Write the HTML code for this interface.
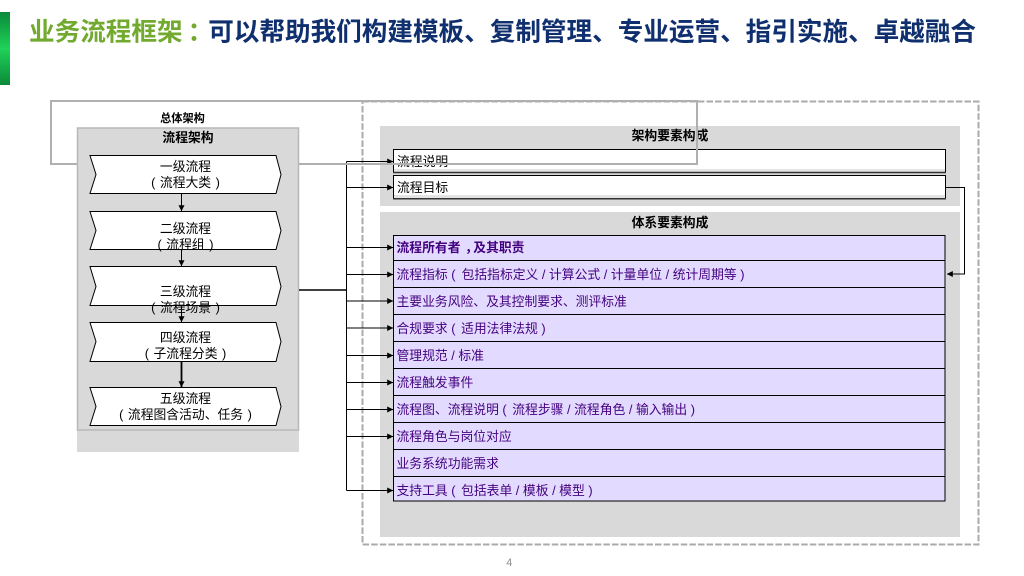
<!DOCTYPE html>
<html lang="zh-CN">
<head>
<meta charset="utf-8">
<title>业务流程框架</title>
<style>
html,body{margin:0;padding:0;background:#fff;width:1024px;height:576px;overflow:hidden}
svg{display:block;position:absolute;left:0;top:0}
text{font-family:"Liberation Sans","Noto Sans CJK SC",sans-serif;font-size:12.8px;fill:#000}
.b{font-weight:700}
.m{text-anchor:middle}
.p{fill:#43007f}
.w{word-spacing:1px}
.l{stroke:#000;stroke-width:1;fill:none}
.c{fill:#fff;stroke:#000;stroke-width:1}
</style>
</head>
<body>
<svg width="1024" height="576" viewBox="0 0 1024 576" xmlns="http://www.w3.org/2000/svg">
<defs>
<linearGradient id="g" x1="0" y1="0" x2="0" y2="1">
<stop offset="0" stop-color="#0a8a3a"/>
<stop offset=".5" stop-color="#1fd258"/>
<stop offset="1" stop-color="#0a8a3a"/>
</linearGradient>
<marker id="a" markerWidth="6" markerHeight="6" refX="5.8" refY="3" orient="auto" markerUnits="userSpaceOnUse">
<path d="M0 0L6 3L0 6Z" fill="#000"/>
</marker>
</defs>

<rect x="0" y="12" width="10" height="73" fill="url(#g)"/>
<text x="29" y="40.500" style="font-size:25.6px;font-weight:700;fill:#0f2f6e"><tspan style="fill:#72a92f">业务流程框架</tspan><tspan dx="5" style="fill:#72a92f;font-family:'Noto Sans CJK TC',sans-serif">：</tspan><tspan dx="-5">可以帮助我们构建模板、复制管理、专业运营、指引实施、卓越融合</tspan></text>

<!-- dashed outer frame -->
<rect x="362.500" y="101.500" width="616" height="443" fill="none" stroke="#ababab" stroke-width="2" stroke-dasharray="6.500 2.100"/>

<!-- right panels -->
<rect x="380" y="126" width="580" height="80" fill="#d9d9d9"/>
<rect x="380" y="212" width="580" height="325" fill="#d9d9d9"/>
<text class="b m" x="670" y="140">架构要素构成</text>
<text class="b m" x="670" y="227">体系要素构成</text>

<rect x="393.500" y="149.500" width="552" height="23" fill="#fff" stroke="#000"/>
<rect x="394" y="169" width="551" height="3" fill="#e4e4e4"/>
<path d="M393 172.500H946" stroke="#333" stroke-width="1.500"/>
<rect x="393.500" y="175.500" width="552" height="23.500" fill="#fff" stroke="#000"/>
<rect x="394" y="195" width="551" height="3" fill="#e4e4e4"/>
<path d="M393 198.800H946" stroke="#333" stroke-width="1.500"/>
<text x="397" y="166">流程说明</text>
<text x="397" y="192">流程目标</text>

<rect x="393.500" y="235.500" width="551.500" height="265.500" fill="#e3dbff" stroke="#000"/>
<path class="l" d="M393 260.500H945M393 287.500H945M393 314.500H945M393 341.500H945M393 368.500H945M393 395.500H945M393 422.500H945M393 449.500H945M393 476.500H945"/>
<text class="b p" x="396.500" y="252">流程所有者<tspan dx="4.500">，</tspan><tspan dx="-4.500">及其职责</tspan></text>
<text class="p" x="396.500" y="279">流程指标 ( <tspan dx="2.500">包括指标定义 / 计算公式 / 计量单位 / 统计周期等 )</tspan></text>
<text class="p" x="396.500" y="306">主要业务风险、及其控制要求、测评标准</text>
<text class="p" x="396.500" y="333">合规要求 ( <tspan dx="2">适用法律法规 )</tspan></text>
<text class="p" x="396.500" y="360">管理规范 / 标准</text>
<text class="p" x="396.500" y="387">流程触发事件</text>
<text class="p" x="396.500" y="414">流程图、流程说明 ( <tspan dx="2">流程步骤 / 流程角色 / 输入输出 )</tspan></text>
<text class="p" x="396.500" y="441">流程角色与岗位对应</text>
<text class="p" x="396.500" y="468">业务系统功能需求</text>
<text class="p" x="396.500" y="495">支持工具 ( <tspan dx="2">包括表单 / 模板 / 模型 )</tspan></text>

<!-- outer gray frame -->
<rect x="51" y="101" width="646" height="63" fill="none" stroke="#b0b0b0" stroke-width="2"/>
<text class="b m" x="182.500" y="122" style="font-size:11.2px">总体架构</text>

<!-- left panel -->
<rect x="77" y="128" width="222" height="324" fill="#d9d9d9"/>
<rect x="77.500" y="128" width="221" height="302" fill="#d9d9d9" stroke="#b8b8b8" stroke-width="1.500"/>
<text class="b m" x="188" y="142">流程架构</text>

<g transform="translate(0 .5)">
<path class="c" d="M90 155H276L281 174L276 193H90L96 174Z"/>
<path class="c" d="M90 211H276L281 230L276 249H90L96 230Z"/>
<path class="c" d="M90 266H276L281 286L276 305H90L96 286Z"/>
<path class="c" d="M90 322H276L281 341L276 361H90L96 341Z"/>
<path class="c" d="M90 387H276L281 406L276 425H90L96 406Z"/>
</g>

<text class="m" x="185.500" y="171">一级流程</text>
<text class="m w" x="185.500" y="187">( 流程大类 )</text>
<text class="m" x="185.500" y="233">二级流程</text>
<text class="m w" x="185.500" y="249">( 流程组 )</text>
<text class="m" x="185.500" y="296">三级流程</text>
<text class="m w" x="185.500" y="312">( 流程场景 )</text>
<text class="m" x="185.500" y="342">四级流程</text>
<text class="m w" x="185.500" y="358">( 子流程分类 )</text>
<text class="m" x="185.500" y="403">五级流程</text>
<text class="m w" x="185.500" y="419">( 流程图含活动、任务 )</text>

<path class="l" d="M181.500 193V211" marker-end="url(#a)"/>
<path class="l" d="M181.500 249V266" marker-end="url(#a)"/>
<path class="l" d="M181.500 305V322" marker-end="url(#a)"/>
<path class="l" style="stroke-width:1.800" d="M181.500 361V387" marker-end="url(#a)"/>

<!-- connectors -->
<path d="M299 290H347" stroke="#000" stroke-width="1.500" fill="none"/>
<path class="l" d="M346.500 490.500V161.500"/>
<path class="l" d="M346.500 161.500H393" marker-end="url(#a)"/>
<path class="l" d="M346.500 187.500H393" marker-end="url(#a)"/>
<path class="l" d="M346.500 247.500H393" marker-end="url(#a)"/>
<path class="l" d="M346.500 274.500H393" marker-end="url(#a)"/>
<path class="l" d="M346.500 301H393" marker-end="url(#a)"/>
<path class="l" d="M346.500 328H393" marker-end="url(#a)"/>
<path class="l" d="M346.500 355.500H393" marker-end="url(#a)"/>
<path class="l" d="M346.500 382.500H393" marker-end="url(#a)"/>
<path class="l" d="M346.500 409.500H393" marker-end="url(#a)"/>
<path class="l" d="M346.500 436.500H393" marker-end="url(#a)"/>
<path class="l" d="M346.500 490.500H393" marker-end="url(#a)"/>
<path class="l" d="M946 187.500H964.500V274H947" marker-end="url(#a)"/>

<!-- frame line over the first row -->
<path d="M299 164H697" stroke="#b0b0b0" stroke-width="2" fill="none"/>

<text class="m" x="509.200" y="566" style="font-size:10.700px;fill:#8a8a8a">4</text>
</svg>
</body>
</html>
